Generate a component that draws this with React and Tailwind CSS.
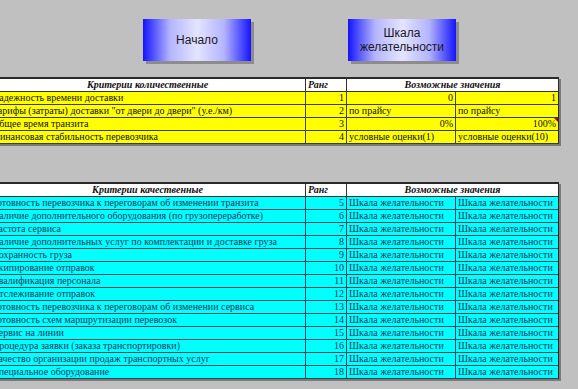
import React from 'react';

const quant = [
    { name: 'Надежность времени доставки', rank: 1, a: '0', b: '1', align: 'right' },
    { name: 'Тарифы (затраты) доставки "от двери до двери" (у.е./км)', rank: 2, a: 'по прайсу', b: 'по прайсу', align: 'left' },
    { name: 'Общее время транзита', rank: 3, a: '0%', b: '100%', align: 'right', note: true },
    { name: 'Финансовая стабильность перевозчика', rank: 4, a: 'условные оценки(1)', b: 'условные оценки(10)', align: 'left' },
];

const qual = [
    'Готовность перевозчика к переговорам об изменении транзита',
    'Наличие дополнительного оборудования (по грузопереработке)',
    'Частота сервиса',
    'Наличие дополнительных услуг по комплектации и доставке груза',
    'Сохранность груза',
    'Экипирование отправок',
    'Квалификация персонала',
    'Отслеживание отправок',
    'Готовность перевозчика к переговорам об изменении сервиса',
    'Готовность схем маршрутизации перевозок',
    'Сервис на линии',
    'Процедура заявки (заказа транспортировки)',
    'Качество организации продаж транспортных услуг',
    'Специальное оборудование',
];

const Button = ({ children }) => (
    <div className="w-[108px] h-[42px] flex items-center justify-center text-center text-[12px] leading-[14px] text-[#1a1a1a] shadow-[3px_3px_0_#8c8c8c] bg-[linear-gradient(90deg,#1414ff_0%,#b4b4ff_25%,#e4e4ff_50%,#b4b4ff_75%,#1414ff_100%)] font-['Liberation_Sans',Arial,sans-serif]">
        {children}
    </div>
);

const Header = ({ title }) => (
    <div className="flex h-[13px] bg-white border-b border-[#333] font-bold italic text-[#111]">
        <div className="w-[316px] shrink-0 border-r border-[#333] text-center">{title}</div>
        <div className="w-[41px] shrink-0 border-r border-[#333] px-[2px]">Ранг</div>
        <div className="flex-1 text-center">Возможные значения</div>
    </div>
);

const App = () => {
    return (
        <div className="w-[578px] h-[389px] overflow-hidden bg-[#c0c0c0] font-['Liberation_Serif','Times_New_Roman',serif] text-[10px] leading-[12px]">
            {/* Buttons */}
            <div className="flex pt-[19px] pl-[143px] gap-[97px]">
                <Button>Начало</Button>
                <Button>
                    Шкала
                    <br />
                    желательности
                </Button>
            </div>

            {/* Quantitative criteria */}
            <div className="ml-[-10px] mt-[16px] w-[569px] border-t-2 border-r border-[#2a2a2a] shadow-[2px_2px_0_#7a7a7a] text-[#111]">
                <Header title="Критерии количественные" />
                {quant.map((r) => (
                    <div key={r.rank} className="flex h-[13px] bg-[#ffff00] border-b border-[#3a3a3a]">
                        <div className="w-[316px] shrink-0 border-r border-[#444] px-[2px] whitespace-nowrap overflow-hidden">{r.name}</div>
                        <div className="w-[41px] shrink-0 border-r border-[#444] px-[2px] text-right">{r.rank}</div>
                        <div className={`w-[109px] shrink-0 border-r border-[#444] px-[2px] whitespace-nowrap ${r.align === 'right' ? 'text-right' : 'text-left'}`}>{r.a}</div>
                        <div className={`relative flex-1 px-[2px] whitespace-nowrap ${r.align === 'right' ? 'text-right' : 'text-left'}`}>
                            {r.b}
                            {r.note && (
                                <span className="absolute right-0 top-0 w-0 h-0 border-t-[4px] border-l-[4px] border-t-[#c00000] border-l-transparent" />
                            )}
                        </div>
                    </div>
                ))}
            </div>

            {/* Qualitative criteria */}
            <div className="ml-[-10px] mt-[38px] w-[569px] border-t-2 border-r border-[#2a2a2a] shadow-[2px_2px_0_#7a7a7a] text-[#1e3560]">
                <Header title="Критерии качественные" />
                {qual.map((name, i) => (
                    <div key={name} className="flex h-[13px] bg-[#00ffff] border-b border-[#244a58]">
                        <div className="w-[316px] shrink-0 border-r border-[#23425e] px-[2px] whitespace-nowrap overflow-hidden">{name}</div>
                        <div className="w-[41px] shrink-0 border-r border-[#23425e] px-[2px] text-right">{i + 5}</div>
                        <div className="w-[109px] shrink-0 border-r border-[#23425e] px-[2px] whitespace-nowrap">Шкала желательности</div>
                        <div className="flex-1 px-[2px] whitespace-nowrap">Шкала желательности</div>
                    </div>
                ))}
            </div>
        </div>
    );
};

export default App;
